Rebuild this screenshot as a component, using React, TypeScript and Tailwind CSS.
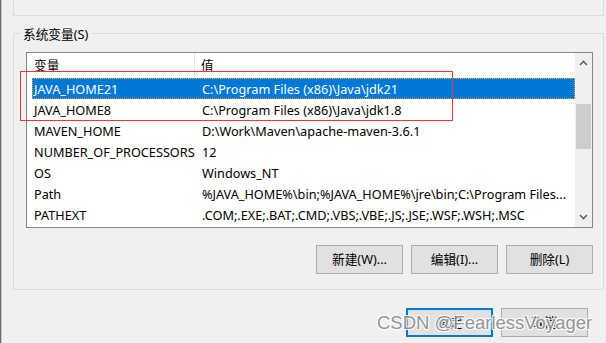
import React from "react";

const rows: [string, string][] = [
  ["JAVA_HOME21", "C:\\Program Files (x86)\\Java\\jdk21"],
  ["JAVA_HOME8", "C:\\Program Files (x86)\\Java\\jdk1.8"],
  ["MAVEN_HOME", "D:\\Work\\Maven\\apache-maven-3.6.1"],
  ["NUMBER_OF_PROCESSORS", "12"],
  ["OS", "Windows_NT"],
  ["Path", "%JAVA_HOME%\\bin;%JAVA_HOME%\\jre\\bin;C:\\Program Files..."],
  ["PATHEXT", ".COM;.EXE;.BAT;.CMD;.VBS;.VBE;.JS;.JSE;.WSF;.WSH;.MSC"],
];

const font = { fontFamily: '"Noto Sans", "Noto Sans CJK SC", sans-serif' };

function Btn({ label, primary }: { label: string; primary?: boolean }) {
  return (
    <div
      className={
        "w-[87px] h-[29px] flex items-center justify-center pt-[1px] bg-[#e1e1e1] text-[12.7px] text-black " +
        (primary ? "border-2 border-[#0078d7]" : "border border-[#adadad]")
      }
    >
      {label}
    </div>
  );
}

export default function App() {
  return (
    <div
      className="relative w-[606px] h-[343px] bg-[#f0f0f0] overflow-hidden flex"
      style={font}
    >
      <div className="w-[1px] h-full bg-[#6b6b6b]" />
      <div className="w-[1px] h-full bg-[#c4c4c4]" />
      <div className="flex flex-col pl-[11px]">
        {/* upper group box remnant */}
        <div className="w-[591px] h-[16px] border-l border-r border-b border-[#dcdcdc]" />
        {/* system variables group */}
        <div className="relative mt-[17px] w-[591px] h-[257px] border border-[#dcdcdc] flex flex-col pl-[12px] pt-[18px]">
          <div className="absolute left-[6px] top-[-9px] px-[3px] bg-[#f0f0f0] text-[12.7px] leading-[18px] text-black">
            系统变量(S)
          </div>
          {/* list box */}
          <div className="w-[567px] h-[176px] border border-[#828790] bg-white flex">
            <div className="flex-1 flex flex-col">
              <div className="h-[25px] flex items-center text-[12.7px] text-black">
                <div className="w-[168px] pl-[7px] h-full flex items-center pt-[1px] border-r border-[#e5e5e5]">变量</div>
                <div className="pl-[6px] pt-[1px]">值</div>
              </div>
              {rows.map(([k, v], i) => (
                <div
                  key={k}
                  className={
                    "ml-[5px] h-[21px] flex items-center pt-[2px] text-[12.7px] whitespace-nowrap " +
                    (i === 0
                      ? "bg-[#0078d7] text-white border border-dotted border-[#e9a640]"
                      : "text-black border border-transparent")
                  }
                >
                  <div className="w-[169px] pl-[1px]">{k}</div>
                  <div>{v}</div>
                </div>
              ))}
            </div>
            {/* scrollbar */}
            <div className="w-[17px] h-full bg-[#f0f0f0] flex flex-col items-center">
              <div className="h-[20px] flex items-center justify-center">
                <svg width="9" height="6" viewBox="0 0 9 6">
                  <path d="M1 5 L4.5 1.5 L8 5" stroke="#606060" strokeWidth="1.6" fill="none" />
                </svg>
              </div>
              <div className="mt-[31px] w-[15px] h-[45px] bg-[#cdcdcd]" />
              <div className="flex-1" />
              <div className="h-[20px] flex items-center justify-center">
                <svg width="9" height="6" viewBox="0 0 9 6">
                  <path d="M1 1 L4.5 4.5 L8 1" stroke="#606060" strokeWidth="1.6" fill="none" />
                </svg>
              </div>
            </div>
          </div>
          <div className="mt-[17px] w-[567px] flex justify-end gap-[8px]">
            <Btn label="新建(W)..." />
            <Btn label="编辑(I)..." />
            <Btn label="删除(L)" />
          </div>
        </div>
        <div className="mt-[18px] w-[575px] flex justify-end gap-[8px]">
          <Btn label="确定" primary />
          <Btn label="取消" />
        </div>
      </div>
      {/* red highlight box */}
      <div className="absolute left-[20px] top-[71px] w-[433px] h-[50px] border border-[#ee3333]" />
      {/* watermark */}
      <div
        className="absolute left-[377px] top-[311px] text-[18.5px] leading-[24px] text-[#8c8c8c] whitespace-nowrap"
        style={{
          fontFamily: '"Liberation Sans", Arial, sans-serif',
          textShadow: "1px 1px 0 #fff, -1px -1px 0 #fff, 1px -1px 0 #fff, -1px 1px 0 #fff",
          opacity: 0.9,
        }}
      >
        CSDN @FearlessVoyager
      </div>
    </div>
  );
}
